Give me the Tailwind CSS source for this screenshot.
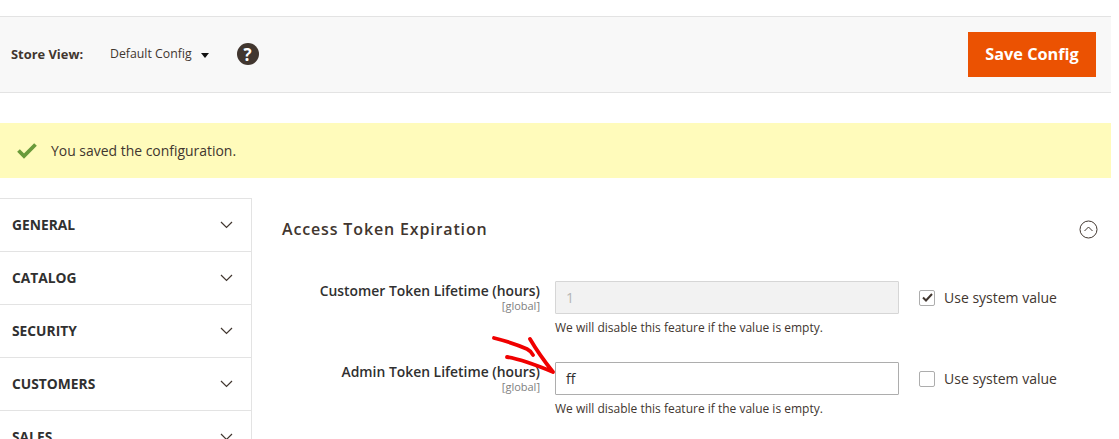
<!DOCTYPE html>
<html>
<head>
<meta charset="utf-8">
<script src="https://cdn.jsdelivr.net/npm/@tailwindcss/browser@4"></script>
</head>
<body class="bg-white">
<div class="relative w-[1119px] h-[439px] overflow-hidden font-['Open_Sans',sans-serif] text-[#41362f]">
  <div class="w-[1111px]">
    <div class="mt-[16px] h-[77px] bg-[#f8f8f8] border-y border-[#e3e3e3] flex items-center pl-[11px] pr-[15px] pb-[1px]">
      <span class="mt-[1px] text-[12.9px] font-bold text-[#41362f] w-[99px]">Store View:</span>
      <span class="mt-[1px] text-[12.3px] text-[#41362f]">Default Config</span>
      <svg class="ml-[9px] mt-[2px]" width="8" height="5" viewBox="0 0 8 5"><path d="M0 0h8L4 5z" fill="#111"/></svg>
      <span class="ml-[28px] w-[22px] h-[22px] rounded-full bg-[#41362f] text-white text-[17px] font-bold flex items-center justify-center leading-none">?</span>
      <button class="ml-auto w-[128px] h-[45px] bg-[#eb5202] text-white text-[16.3px] font-bold">Save Config</button>
    </div>
    <div class="mt-[30px] h-[55px] bg-[#fffbbb] flex items-center pl-[17px] pt-[1px] text-[13.95px] text-[#41362f]">
      <svg width="20" height="16" viewBox="0 0 20 16" class="mr-[14px]"><path d="M1.500 7.500l5.500 5.500L18.500 1.500" fill="none" stroke="#6a9a3a" stroke-width="3.800"/></svg>
      You saved the configuration.
    </div>
    <div class="mt-[20px] flex">
      <nav class="w-[252px] shrink-0 border-r border-t border-[#e3e3e3]">
        <div class="h-[53px] border-b border-[#e3e3e3] flex items-center justify-between pl-[12px] pr-[18px] text-[13.8px] font-bold text-[#303030]">GENERAL<svg width="13" height="8" viewBox="0 0 13 8"><path d="M1 1l5.500 5.500L12 1" fill="none" stroke="#41362f" stroke-width="1.2"/></svg></div>
        <div class="h-[53px] border-b border-[#e3e3e3] flex items-center justify-between pl-[12px] pr-[18px] text-[13.8px] font-bold text-[#303030]">CATALOG<svg width="13" height="8" viewBox="0 0 13 8"><path d="M1 1l5.500 5.500L12 1" fill="none" stroke="#41362f" stroke-width="1.2"/></svg></div>
        <div class="h-[53px] border-b border-[#e3e3e3] flex items-center justify-between pl-[12px] pr-[18px] text-[13.8px] font-bold text-[#303030]">SECURITY<svg width="13" height="8" viewBox="0 0 13 8"><path d="M1 1l5.500 5.500L12 1" fill="none" stroke="#41362f" stroke-width="1.2"/></svg></div>
        <div class="h-[53px] border-b border-[#e3e3e3] flex items-center justify-between pl-[12px] pr-[18px] text-[13.8px] font-bold text-[#303030]">CUSTOMERS<svg width="13" height="8" viewBox="0 0 13 8"><path d="M1 1l5.500 5.500L12 1" fill="none" stroke="#41362f" stroke-width="1.2"/></svg></div>
        <div class="h-[53px] border-b border-[#e3e3e3] flex items-center justify-between pl-[12px] pr-[18px] text-[13.8px] font-bold text-[#303030]">SALES<svg width="13" height="8" viewBox="0 0 13 8"><path d="M1 1l5.500 5.500L12 1" fill="none" stroke="#41362f" stroke-width="1.2"/></svg></div>
      </nav>
      <main class="flex-1 pl-[30px] pr-[13px] pt-[20px]">
        <div class="flex items-center justify-between h-[22px]">
          <h2 class="text-[16px] font-semibold tracking-[0.85px] text-[#41362f]">Access Token Expiration</h2>
          <svg width="19" height="19" viewBox="0 0 19 19"><circle cx="9.500" cy="9.500" r="8.500" fill="none" stroke="#41362f"/><path d="M5.500 11l4-4 4 4" fill="none" stroke="#41362f"/></svg>
        </div>
        <div class="mt-[41px] flex">
          <div class="w-[258px] shrink-0 text-right pt-[1px]">
            <div class="text-[13.9px] leading-[17px] font-semibold text-[#303030]">Customer Token Lifetime (hours)</div>
            <div class="text-[11px] leading-[13px] text-[#808080]">[global]</div>
          </div>
          <div class="ml-[15px] w-[344px] shrink-0">
            <div class="h-[33px] bg-[#f2f2f2] border border-[#d6d6d6] rounded-[1px] pl-[10px] flex items-center text-[14px] text-[#b5b5b5]">1</div>
            <div class="mt-[6px] text-[12px] leading-[16px] text-[#41362f]">We will disable this feature if the value is empty.</div>
          </div>
          <label class="ml-[20px] h-[33px] flex items-center gap-[9px] text-[14px] text-[#41362f]">
            <span class="w-[16px] h-[16px] border border-[#adadad] rounded-[2px] flex items-center justify-center"><svg width="11" height="9" viewBox="0 0 11 9"><path d="M1 4.500l3 3L10 1" fill="none" stroke="#41362f" stroke-width="2"/></svg></span>
            Use system value
          </label>
        </div>
        <div class="mt-[26px] flex">
          <div class="w-[258px] shrink-0 text-right pt-[1px]">
            <div class="text-[13.9px] leading-[17px] font-semibold text-[#303030]">Admin Token Lifetime (hours)</div>
            <div class="text-[11px] leading-[13px] text-[#808080]">[global]</div>
          </div>
          <div class="ml-[15px] w-[344px] shrink-0">
            <div class="h-[33px] bg-white border border-[#adadad] rounded-[1px] pl-[10px] flex items-center text-[14px] text-[#303030]">ff</div>
            <div class="mt-[6px] text-[12px] leading-[16px] text-[#41362f]">We will disable this feature if the value is empty.</div>
          </div>
          <label class="ml-[20px] h-[33px] flex items-center gap-[9px] text-[14px] text-[#41362f]">
            <span class="w-[16px] h-[16px] border border-[#adadad] rounded-[2px]"></span>
            Use system value
          </label>
        </div>
      </main>
    </div>
  </div>
  <svg class="absolute left-[490px] top-[332px]" width="70" height="46" viewBox="0 0 70 46"><path d="M4 6C16 9 28 13 37 17Q41 19 43 23M17 25C30 27 46 33 63 40C55 30 47 19 40 7" fill="none" stroke="#f00000" stroke-width="3.800" stroke-linecap="round" stroke-linejoin="round"/></svg>
</div>
</body>
</html>
